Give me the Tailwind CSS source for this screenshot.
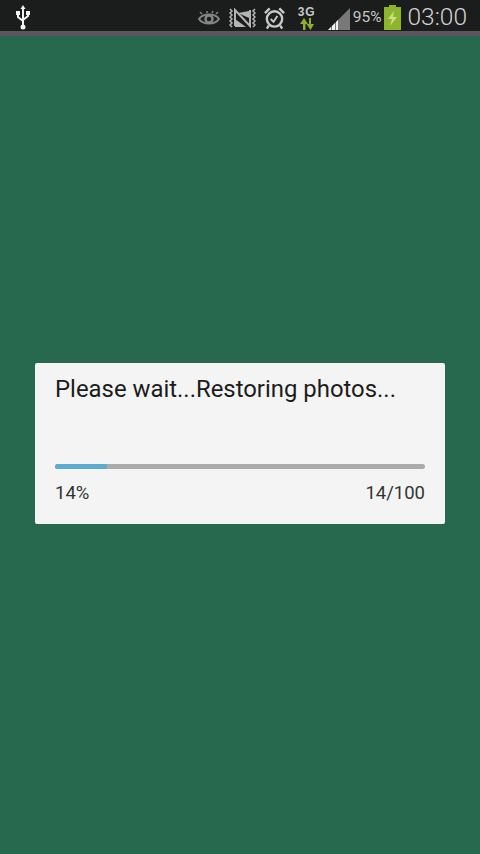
<!DOCTYPE html>
<html lang="en">
<head>
    <meta charset="UTF-8">
    <meta name="viewport" content="width=device-width, initial-scale=1.0">
    <title>Restoring photos</title>
    <script src="https://cdn.jsdelivr.net/npm/@tailwindcss/browser@4"></script>
</head>
<body class="w-[480px] h-[854px] overflow-hidden flex flex-col bg-[#27694e] font-['Roboto',sans-serif]">
    <!-- status bar -->
    <div class="h-[31px] shrink-0 bg-[#1b1c1c] flex items-center">
        <svg class="ml-[15px] mt-[5px]" width="16" height="26" viewBox="0 0 16 26" fill="none" stroke="#f2f2f2" stroke-width="2">
            <path d="M8 3v19M3 9v3l5 4M13 9v2l-5 4"/>
            <path d="M8 0l2.500 4h-5z" fill="#f2f2f2" stroke="none"/>
            <rect x="1" y="6" width="4" height="4" fill="#f2f2f2" stroke="none"/>
            <rect x="11" y="6" width="4" height="4" fill="#f2f2f2" stroke="none"/>
            <circle cx="8" cy="22" r="2.500" fill="#f2f2f2" stroke="none"/>
        </svg>
        <div class="ml-auto flex items-center">
            <!-- eye -->
            <svg class="mt-[4px]" width="22" height="16" viewBox="0 0 22 16" fill="none" stroke="#858585">
                <path d="M1 9c4-6 16-6 20 0-4 6-16 6-20 0z" stroke-width="2"/>
                <circle cx="11" cy="9" r="3.500" stroke-width="2.500"/>
                <path d="M4 4L2 2M9 3V1M14 3l1-2M18 4l2-2" stroke-width="1.500"/>
            </svg>
            <!-- no notifications -->
            <svg class="ml-[9px] mt-[4px]" width="27" height="20" viewBox="0 0 27 20" fill="none" stroke="#b4b4b4">
                <path d="M1 1l2 2-2 2 2 2-2 2 2 2-2 2 2 2-2 2 2 2" stroke-width="1.500"/>
                <path d="M26 1l-2 2 2 2-2 2 2 2-2 2 2 2-2 2 2 2-2 2" stroke-width="1.500"/>
                <path d="M6 18V2l15 16V2" stroke-width="2"/>
                <path d="M9 5l11 5V3zM6 11l11 8H6z" fill="#b4b4b4" stroke="none"/>
            </svg>
            <!-- alarm -->
            <svg class="ml-[7px] mt-[4px]" width="23" height="24" viewBox="0 0 24 24" fill="none" stroke="#c8c8c8">
                <circle cx="12" cy="13" r="8" stroke-width="2.500"/>
                <path d="M8 13l3 3 4-6" stroke-width="2"/>
                <path d="M2 7l5-5M22 7l-5-5M6 20l-2 3M18 20l2 3" stroke-width="2.500"/>
            </svg>
            <!-- 3G -->
            <div class="ml-[11px] mt-[5px] w-[20px] flex flex-col items-center">
                <span class="text-[12px] leading-[12px] tracking-[1px] font-bold text-[#c8c8c8] font-['Liberation_Sans',sans-serif]">3G</span>
                <svg width="16" height="12" viewBox="0 0 16 12" fill="#8fae2e">
                    <path d="M4 12V6H1l4-6 4 6H6.500v6zM10 0v6H7.500l4 6 3.500-6H12V0z"/>
                </svg>
            </div>
            <!-- signal -->
            <svg class="ml-[11px] mt-[6px]" width="22" height="22" viewBox="0 0 22 22">
                <path d="M0 22h22V0z" fill="#787878"/>
                <path d="M0 22h3v-3l-3 3zM4 22h3v-7l-3 3zM8 22h2V12l-2 2z" fill="#f0f0f0"/>
            </svg>
            <span class="ml-[3px] mt-[3px] text-[15.500px] leading-[31px] text-[#c6c6c6]">95%</span>
            <!-- battery -->
            <svg class="ml-[3px] mt-[3px]" width="17" height="25" viewBox="0 0 17 25">
                <path d="M5 0h7v2h5v23H0V2h5z" fill="#8db52c"/>
                <path d="M10 6l-6 8h4l-2 7 7-9H9z" fill="#c9de88"/>
            </svg>
            <span class="ml-[6px] mr-[13px] mt-[2px] text-[24.500px] leading-[31px] font-light text-[#d2d2d2]">03:00</span>
        </div>
    </div>
    <div class="h-[5px] shrink-0 bg-[#5d5560]"></div>

    <!-- dialog -->
    <div class="flex-1 flex flex-col items-center pt-[327px]">
        <div class="w-[410px] h-[161px] bg-[#f4f4f4] rounded-[2px] px-[20px] flex flex-col">
            <p class="mt-[11px] text-[23.900px] leading-[30px] text-[#1c1c1c]">Please wait...Restoring photos...</p>
            <div class="mt-[60px] h-[5px] rounded-full bg-[#ababab] overflow-hidden">
                <div class="h-full bg-[#5aacd3]" style="width: 14%"></div>
            </div>
            <div class="mt-[12px] flex justify-between text-[18.500px] leading-[24px] text-[#333333]">
                <span>14%</span>
                <span>14/100</span>
            </div>
        </div>
    </div>
</body>
</html>
